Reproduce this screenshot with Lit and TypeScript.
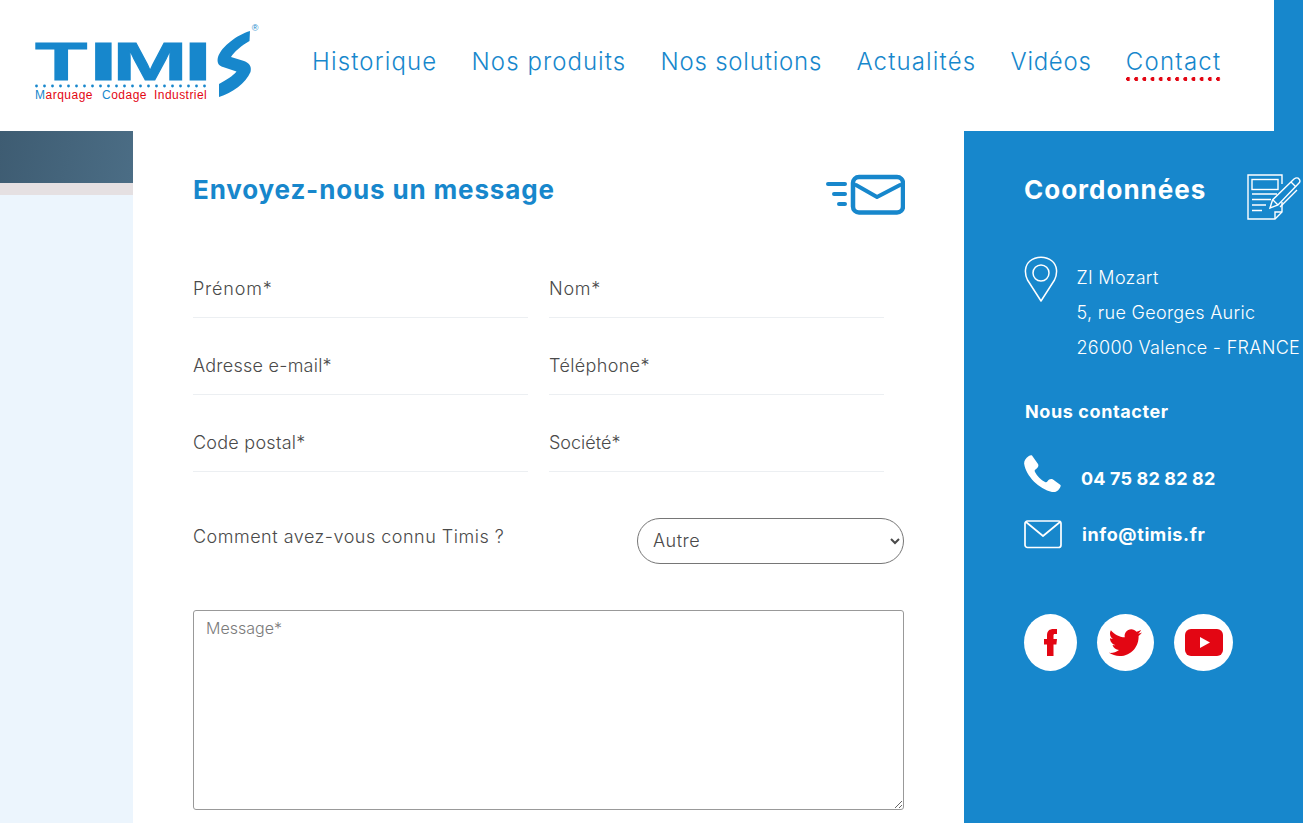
import { LitElement, html, css, svg } from "lit";
import { customElement } from "lit/decorators.js";

const NAV: [string, string][] = [
  ["Historique", "1.15px"],
  ["Nos produits", "1.05px"],
  ["Nos solutions", "0.8px"],
  ["Actualités", "1.15px"],
  ["Vidéos", "0.72px"],
  ["Contact", "1.25px"],
];

const FIELDS: [string, string][] = [
  ["Prénom*", "0.8px"],
  ["Nom*", "0.75px"],
  ["Adresse e-mail*", "0.25px"],
  ["Téléphone*", "0.35px"],
  ["Code postal*", "0.25px"],
  ["Société*", "0px"],
];

const logoDots = Array.from({ length: 22 }, (_, i) => svg`<circle cx=${6.5 + i * 8} cy="65" r="1.4" fill="#1787cc"/>`);

@customElement("app-root")
export class AppRoot extends LitElement {
  static styles = css`
    :host {
      display: block;
      width: 1303px;
      height: 823px;
      overflow: hidden;
      background: #1787cc;
      font-family: Inter, "Noto Sans", sans-serif;
      font-weight: 300;
    }
    .header {
      width: 1274px;
      height: 131px;
      background: #fff;
      display: flex;
      align-items: center;
    }
    .logo { width: 240px; height: 90px; margin-left: 30px; flex: none; }
    .brand text { font-family: "Liberation Sans", sans-serif; font-weight: 700; font-size: 53px; fill: #1787cc; stroke: #1787cc; stroke-width: 0.8px; }
    .tag { font-family: "Liberation Sans", sans-serif; font-size: 12px; fill: #e30613; }
    .tag .b { fill: #1787cc; }
    .reg { font-family: "Liberation Sans", sans-serif; font-size: 9px; fill: #1787cc; }
    .nav { display: flex; gap: 34.2px; margin-left: 42px; font-size: 24px; color: #1787cc; line-height: 30px; margin-top: -8px; }
    .nav a { display: block; position: relative; }
    .nav a.active::after {
      content: "";
      position: absolute;
      left: 0; right: 0; top: 30px;
      height: 4px;
      background: radial-gradient(circle at 2px 2px, #e30613 1.9px, transparent 2.2px) 0 0 / 8.2px 4px repeat-x;
    }
    .body { display: grid; grid-template-columns: 133px 831px 339px; height: 692px; }
    .left { background: #ecf5fd; }
    .photo { height: 52px; background: linear-gradient(100deg, #3e5c72, #4b6d85); }
    .band { height: 12px; background: #e5e0e2; }
    .main { background: #fff; padding: 43px 60px 0 60px; color: #4a4a4a; }
    .title-row { display: flex; justify-content: space-between; align-items: center; height: 41px; margin-bottom: 55px; }
    h2 { margin: 0; font-size: 26px; font-weight: 700; letter-spacing: 0.85px; color: #1787cc; }
    .title-row h2 { margin-top: -10px; }
    .mail-icon { width: 80px; height: 41px; display: block; margin-right: -1px; }
    .fields { display: grid; grid-template-columns: 335px 335px; column-gap: 21px; row-gap: 29px; }
    .fields input {
      display: block;
      width: 100%;
      box-sizing: border-box;
      height: 48px;
      padding: 0 0 10px;
      border: 0;
      border-bottom: 1px solid #eceff2;
      outline: 0;
      background: none;
      font: inherit;
      font-size: 18px;
    }
    .fields input::placeholder { color: #4a4a4a; opacity: 1; }
    .how { display: flex; justify-content: space-between; margin-top: 46px; }
    .how label { font-size: 18px; line-height: 38px; letter-spacing: 0.5px; }
    select {
      width: 267px;
      height: 46px;
      box-sizing: border-box;
      border: 1px solid #767676;
      border-radius: 23px;
      background: #fff;
      padding: 0 11px 2px;
      font: inherit;
      font-size: 18px;
      letter-spacing: 0.5px;
      color: #4a4a4a;
    }
    textarea {
      display: block;
      margin-top: 46px;
      width: 711px;
      height: 200px;
      box-sizing: border-box;
      border: 1px solid #999;
      border-radius: 3px;
      padding: 7px 12px;
      font: inherit;
      font-size: 16px;
      outline: 0;
    }
    textarea::placeholder { color: #7b7b7b; opacity: 1; }
    .right { padding: 43px 0 0 60px; color: #fff; font-size: 18px; }
    .coord { display: flex; align-items: center; height: 46px; gap: 41px; }
    .coord h2 { color: #fff; margin-top: -16px; letter-spacing: 1px; }
    .addr { display: flex; gap: 18.5px; margin-top: 36px; margin-right: -1px; }
    .addr p { margin: 4px 0 0; line-height: 35px; white-space: nowrap; letter-spacing: 0.3px; }
    .pin { width: 34px; height: 46px; flex: none; }
    h3 { margin: 35px 0 0 1px; font-size: 18px; line-height: 24px; font-weight: 700; letter-spacing: 0.6px; }
    .line { display: flex; align-items: center; font-weight: 700; font-size: 18px; }
    .line.tel { margin-top: 31px; gap: 20px; height: 38px; letter-spacing: 0.15px; }
    .line.tel span { padding-top: 8px; }
    .line.mail { margin-top: 27px; gap: 20px; height: 29px; letter-spacing: 0.6px; }
    .social { display: flex; gap: 20px; margin-top: 65px; }
    .social span { display: flex; align-items: center; justify-content: center; height: 57px; background: #fff; border-radius: 50%; }
  `;

  render() {
    return html`
      <div class="header">
        <svg class="logo" viewBox="0 0 240 90" aria-label="Timis">
          <g class="brand">
            <text transform="translate(5 59) scale(1.62 1)">T</text>
            <text transform="translate(59 59) scale(1.95 1)">I</text>
            <text transform="translate(82.500 59) scale(1.7 1)">M</text>
            <text transform="translate(153.500 59) scale(1.95 1)">I</text>
          </g>
          ${logoDots}
          <text class="tag" x="5" y="77.5" letter-spacing="0.5"><tspan class="b">M</tspan>arquage</text>
          <text class="tag" x="72" y="77.5" letter-spacing="0.5"><tspan class="b">C</tspan>odage</text>
          <text class="tag" x="124" y="77.5" letter-spacing="0.45">Industriel</text>
          <path d="M220 10 C207 14 192 25 188 36 C186.500 42 189 45 193 46 L206.500 50.500 C203 55 196 59 189 63 L189 76 C202 72 216 62 220.500 51 C222 45 219 42 214 40 L201 36 C204 31 212 24 219.500 20 Z" fill="#1787cc"/>
          <text class="reg" x="225" y="10" text-anchor="middle">®</text>
        </svg>
        <nav class="nav">
          ${NAV.map(([t, ls]) => html`<a class=${t === "Contact" ? "active" : ""} style="letter-spacing:${ls}">${t}</a>`)}
        </nav>
      </div>
      <div class="body">
        <aside class="left"><div class="photo"></div><div class="band"></div></aside>
        <main class="main">
          <div class="title-row">
            <h2>Envoyez-nous un message</h2>
            <svg class="mail-icon" viewBox="0 0 80 41" fill="none" stroke="#1787cc" stroke-linecap="round">
              <path d="M3 10H20M9 20H20M14 30H20" stroke-width="4"/>
              <rect x="28" y="3" width="50" height="35.500" rx="6" stroke-width="4.500"/>
              <path d="M31 11 L52 23 L75 11" stroke-width="4" stroke-linejoin="round"/>
            </svg>
          </div>
          <div class="fields">
            ${FIELDS.map(([p, ls]) => html`<input placeholder=${p} style="letter-spacing:${ls}" />`)}
          </div>
          <div class="how">
            <label>Comment avez-vous connu Timis ?</label>
            <select><option>Autre</option></select>
          </div>
          <textarea placeholder="Message*"></textarea>
        </main>
        <aside class="right">
          <div class="coord">
            <h2>Coordonnées</h2>
            <svg width="54" height="46" viewBox="0 0 54 46" fill="none" stroke="#fff" stroke-width="1.4">
              <path d="M35 28V38L28 45H1V1H35V10"/>
              <path d="M28 45V38H35"/>
              <rect x="5" y="5.500" width="26" height="10"/>
              <path d="M5 20H30M5 25.500H24M5 31H19M5 36.500H15"/>
              <path d="M23 34L25.500 26L47 5C49 3.500 51 3.500 52 5C53.500 6.500 53 8 52 9L31 31Z"/>
              <path d="M26 26L31 31M44 8L49 13M33 33L50 16"/>
            </svg>
          </div>
          <div class="addr">
            <svg class="pin" viewBox="0 0 34 46" fill="none" stroke="#fff" stroke-width="1.5">
              <path d="M17 45 L3.500 24 C0 17 1 9 6 5 C12 0 22 0 28 5 C33 9 34 17 30.500 24 Z" stroke-linejoin="round"/>
              <circle cx="17" cy="17" r="8"/>
            </svg>
            <p>ZI Mozart<br />5, rue Georges Auric<br />26000 Valence - FRANCE</p>
          </div>
          <h3>Nous contacter</h3>
          <div class="line tel">
            <svg width="37" height="38" viewBox="0 0 37 38" fill="#fff">
              <path d="M8 0.500 L14 9 C15 11 14 13 11.500 14.500 C10.500 15 10.500 16 11 17 C13 21 17 25 21 27 C22 27.500 23 27.200 23.500 26.300 C25 24 27 23.500 29 24.500 L36.500 30 C37 31 36.500 32 35.500 33.500 C33.500 36.500 31 37.500 28 37 C15 34 2 21 0.200 9 C-0.200 6 1.500 3.500 4.500 1.200 C6 0.200 7.500 0 8 0.500 Z"/>
            </svg>
            <span>04 75 82 82 82</span>
          </div>
          <div class="line mail">
            <svg width="38" height="29" viewBox="0 0 38 29" fill="none" stroke="#fff" stroke-width="1.7">
              <rect x="1" y="1" width="36" height="26.500" rx="2.500"/>
              <path d="M2 2 L19 16 L36 2" stroke-linejoin="round"/>
            </svg>
            <span>info@timis.fr</span>
          </div>
          <div class="social">
            <span style="width:53px">
              <svg width="13" height="27" viewBox="0 0 13 27" fill="#e30613"><path d="M3 27V15.500H0V10H3V6.500C3 2 5.500 0 9.500 0H13V5H11C9.700 5 9.500 5.500 9.500 7V10H13L12.400 15.500H9.500V27Z"/></svg>
            </span>
            <span style="width:57px">
              <svg width="33" height="27" viewBox="0 0 33 27" fill="#e30613"><path d="M33 3.500C31.800 4 30.500 4.500 29 4.600C30.500 3.700 31.600 2.400 32 1C30.600 1.800 29.100 2.400 27.500 2.700C26.200 1.200 24.300 0.300 22.300 0.300C18 0.300 14.900 4.200 15.800 8.300C10.200 8 5.200 5.300 1.900 1.200C0.200 4.200 1 8 4 10C2.900 10 1.900 9.700 1 9.200C1 12.500 3.300 15.300 6.500 16C5.500 16.300 4.500 16.300 3.500 16.100C4.400 18.900 7 20.900 10 21C7 23.200 3.600 24.200 0 23.800C3 25.800 6.700 27 10.500 27C23 27 30 16.500 29.600 6.900C31 5.900 32.100 4.800 33 3.500Z"/></svg>
            </span>
            <span style="width:59px">
              <svg width="38" height="27" viewBox="0 0 38 27"><rect width="38" height="27" rx="6" fill="#e30613"/><path d="M15 8L25 13.500L15 19Z" fill="#fff"/></svg>
            </span>
          </div>
        </aside>
      </div>
    `;
  }
}
